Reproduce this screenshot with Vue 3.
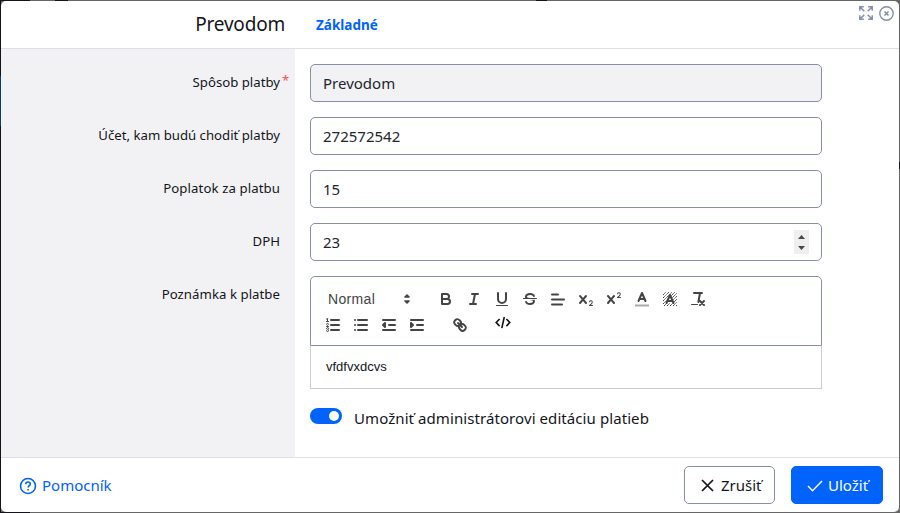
<script setup>
import { ref } from 'vue'

const method = ref('Prevodom')
const account = ref('272572542')
const fee = ref('15')
const vat = ref('23')
const editable = ref(true)
</script>

<template>
  <div class="page">
    <div class="modal">
      <header class="header">
        <h1 class="title">Prevodom</h1>
        <nav class="tabs"><a class="tab">Základné</a></nav>
        <div class="window-tools">
          <svg width="14" height="14" viewBox="0 0 14 14" fill="none" stroke="#868ea8" stroke-width="1.5">
            <path d="M.8 4.8v-4h4M1 1l4.3 4.3M9.2.8h4v4M13 1 8.7 5.3M.8 9.2v4h4M1 13l4.3-4.3M9.2 13.2h4v-4M13 13 8.7 8.7" />
          </svg>
          <svg width="15" height="15" viewBox="0 0 15 15" fill="none" stroke="#868ea8">
            <circle cx="7.5" cy="7.5" r="6.7" stroke-width="1.4" />
            <path d="m5.5 5.5 4 4m0-4-4 4" stroke-width="1.6" />
          </svg>
        </div>
      </header>

      <main class="body">
        <div class="row">
          <label class="label"><span>Spôsob platby</span><span class="required">*</span></label>
          <div class="field disabled"><input v-model="method" disabled /></div>
        </div>
        <div class="row">
          <label class="label"><span>Účet, kam budú chodiť platby</span></label>
          <div class="field"><input v-model="account" /></div>
        </div>
        <div class="row">
          <label class="label"><span class="loose">Poplatok za platbu</span></label>
          <div class="field"><input v-model="fee" /></div>
        </div>
        <div class="row">
          <label class="label"><span>DPH</span></label>
          <div class="field">
            <input v-model="vat" />
            <svg class="spinner" width="15" height="24" viewBox="0 0 15 24">
              <path fill="#efefef" d="M0 0h15v24H0z" />
              <path fill="#484848" d="m4 9 3.5-4L11 9zM4 16h7l-3.5 4z" />
            </svg>
          </div>
        </div>
        <div class="row">
          <label class="label"><span class="slightly-loose">Poznámka k platbe</span></label>
          <div class="editor">
            <div class="toolbar">
              <div class="tool-row">
                <div class="picker">
                  <span>Normal</span>
                  <svg class="q" viewBox="0 0 18 18">
                    <path class="f s" d="m7 11 2 2 2-2zM7 7l2-2 2 2z" />
                  </svg>
                </div>
                <button>
                  <svg class="q" viewBox="0 0 18 18"><path class="s" d="M5 4h4.5a2.5 2.5 0 0 1 0 5H5zM5 9h5.5a2.5 2.5 0 0 1 0 5H5z" /></svg>
                </button>
                <button>
                  <svg class="q" viewBox="0 0 18 18"><path class="s" d="M7 4h6M5 14h6M8 14l2-10" /></svg>
                </button>
                <button>
                  <svg class="q" viewBox="0 0 18 18"><path class="s" d="M5 3v6a4.012 4.012 0 0 0 4 4 4.012 4.012 0 0 0 4-4V3" /><rect class="f" height="1" rx=".5" width="12" x="3" y="15" /></svg>
                </button>
                <button>
                  <svg class="q" viewBox="0 0 18 18">
                    <path class="s thin" d="M15.5 8.5h-13" />
                    <path class="f" d="M9.007 8C6.542 7.791 6 7.519 6 6.5 6 5.792 7.283 5 9 5c1.571 0 2.765.679 2.969 1.309a1 1 0 0 0 1.9-.617C13.356 4.106 11.354 3 9 3 6.2 3 4 4.538 4 6.5a3.2 3.2 0 0 0 .5 1.843ZM8.984 10C11.457 10.208 12 10.479 12 11.5c0 .708-1.283 1.5-3 1.5-1.571 0-2.765-.679-2.969-1.309a1 1 0 1 0-1.9.617C4.644 13.894 6.646 15 9 15c2.8 0 5-1.538 5-3.5a3.2 3.2 0 0 0-.5-1.843Z" />
                  </svg>
                </button>
                <button>
                  <svg class="q" viewBox="0 0 18 18"><path class="s" d="M3 9.5h12M3 14.5h10M3 4.5h6" /></svg>
                </button>
                <button>
                  <svg class="q" viewBox="0 0 18 18">
                    <path class="f" d="M15.5 15H13.861a3.858 3.858 0 0 0 1.914-2.975 1.8 1.8 0 0 0-1.6-1.751A1.921 1.921 0 0 0 12.021 11.7a.5.5 0 1 0 .957.291.914.914 0 0 1 1.053-.725.81.81 0 0 1 .744.762c0 1.076-1.17 1.87-1.938 2.43A1.456 1.456 0 0 0 12 15.5a.5.5 0 0 0 .5.5h3a.5.5 0 0 0 0-1ZM9.65 5.241a1 1 0 0 0-1.409.108L6 7.964 3.759 5.349A1 1 0 0 0 2.192 6.59L4.684 9.5 2.241 12.35a1 1 0 0 0 1.518 1.3L6 11.036l2.241 2.614a1 1 0 1 0 1.518-1.3L7.317 9.5 9.759 6.651A1 1 0 0 0 9.65 5.241Z" />
                  </svg>
                </button>
                <button>
                  <svg class="q" viewBox="0 0 18 18">
                    <path class="f" d="M15.5 7H13.861a4.015 4.015 0 0 0 1.914-2.975 1.8 1.8 0 0 0-1.6-1.751A1.922 1.922 0 0 0 12.021 3.7a.5.5 0 1 0 .957.291.917.917 0 0 1 1.053-.725.81.81 0 0 1 .744.762c0 1.077-1.164 1.925-1.934 2.486A1.423 1.423 0 0 0 12 7.5a.5.5 0 0 0 .5.5h3a.5.5 0 0 0 0-1ZM9.651 5.241a1 1 0 0 0-1.41.108L6 7.964 3.759 5.349a1 1 0 1 0-1.519 1.3L4.683 9.5 2.241 12.35a1 1 0 1 0 1.519 1.3L6 11.036l2.241 2.614a1 1 0 0 0 1.519-1.3L7.317 9.5l2.442-2.849A1 1 0 0 0 9.651 5.241Z" />
                  </svg>
                </button>
                <button>
                  <svg class="q" viewBox="0 0 18 18"><path stroke="#aaa" stroke-width="2" d="M2 15.5h14" /><path class="s" d="M5.5 11 9 3l3.5 8M11.63 9H6.38" /></svg>
                </button>
                <button>
                  <svg class="q" viewBox="0 0 18 18">
                    <path stroke="#444" stroke-width="1" stroke-dasharray="1.4 .4" d="m2 5 3-3M2 8l6-6M2 11l9-9M2 14 14 2M3 16 16 3M6 16 16 6M9 16l7-7M12 16l4-4M15 16l1-1" />
                    <path fill="#fff" d="M8 5h2l3.5 8h-9z" />
                    <path class="s" d="M5.5 13 9 5l3.5 8M11.63 11H6.38" />
                  </svg>
                </button>
                <button>
                  <svg class="q" viewBox="0 0 18 18"><path class="s" d="M5 3h8M9.35 12 11.04 3M11 11l4 4M15 11l-4 4" /><rect class="f" height="1" rx=".5" width="7" x="2" y="14" /></svg>
                </button>
              </div>
              <div class="tool-row">
                <button>
                  <svg class="q" viewBox="0 0 18 18">
                    <path class="s" d="M7 4h8M7 9h8M7 14h8" />
                    <path class="s thin" d="M2.5 5.5h2M3.5 5.5v-3l-1 .5M4.5 10.5h-2c0-.9 1.85-1 1.85-2.1A.9.9 0 0 0 2.5 8.2M2.5 14.8a1 1 0 1 0 1-1.2 1 1 0 1 0-1-1" />
                  </svg>
                </button>
                <button>
                  <svg class="q" viewBox="0 0 18 18"><path class="s" d="M6 4h9M6 9h9M6 14h9M3 4h.01M3 9h.01M3 14h.01" /></svg>
                </button>
                <button>
                  <svg class="q" viewBox="0 0 18 18"><path class="s" d="M3 14h12M3 4h12M9 9h6" /><path class="s f" d="M5 7v4L3 9z" /></svg>
                </button>
                <button>
                  <svg class="q" viewBox="0 0 18 18"><path class="s" d="M3 14h12M3 4h12M9 9h6" /><path class="s f" d="M3 7v4l2-2z" /></svg>
                </button>
                <button class="group">
                  <svg class="q" viewBox="0 0 18 18">
                    <path class="s" d="m7 7 4 4" />
                    <path class="s" d="M8.9 4.577a3.476 3.476 0 0 1 .36 4.679A3.476 3.476 0 0 1 4.577 8.9C3.185 7.5 2.035 6.4 4.217 4.217S7.5 3.185 8.9 4.577ZM13.423 9.1a3.476 3.476 0 0 0-4.679-.36 3.476 3.476 0 0 0 .36 4.679c1.392 1.392 2.5 2.542 4.679.36S14.815 10.5 13.423 9.1Z" />
                  </svg>
                </button>
                <button class="group code">
                  <svg width="16" height="14" viewBox="0 0 16 14" fill="none" stroke="#111" stroke-width="1.6">
                    <path d="M4.6 3 1.2 6.5l3.4 3.6M11.4 3l3.4 3.5-3.4 3.6M9.3 1 6.8 12.2" />
                  </svg>
                </button>
              </div>
            </div>
            <div class="content">vfdfvxdcvs</div>
          </div>
        </div>
        <div class="row switch-row">
          <span class="label"></span>
          <span class="switch" :class="{ on: editable }" @click="editable = !editable"><i></i></span>
          <span class="switch-text">Umožniť administrátorovi editáciu platieb</span>
        </div>
      </main>

      <footer class="footer">
        <a class="help">
          <svg width="18" height="18" viewBox="0 0 18 18" fill="none" stroke="#0063fb" stroke-width="1.6">
            <circle cx="9" cy="9" r="7.5" />
            <path d="M6.7 7.2C6.8 5.7 7.7 5 9 5s2.3.8 2.3 2c0 1.6-2.2 1.7-2.2 3.5M9.1 12v1.5" />
          </svg>
          <span>Pomocník</span>
        </a>
        <button class="btn cancel">
          <svg width="13" height="13" viewBox="0 0 13 13" fill="none" stroke="#13151b" stroke-width="1.7"><path d="m1 1 11 11M12 1 1 12" /></svg>
          <span>Zrušiť</span>
        </button>
        <button class="btn save">
          <svg width="16" height="12" viewBox="0 0 16 12" fill="none" stroke="#fff" stroke-width="1.5"><path d="m1 6 4.5 4.7L15 1" /></svg>
          <span>Uložiť</span>
        </button>
      </footer>
    </div>
  </div>
</template>

<style>
body {
  margin: 0;
  overflow: hidden;
}
</style>

<style scoped>
* {
  box-sizing: border-box;
}
.page {
  width: 900px;
  height: 513px;
  padding: 1px;
  background:
    linear-gradient(#0b3e6d, #0b3e6d) 0 76px / 1px 50px no-repeat,
    linear-gradient(#14131c, #14131c) 0 0 / 1px 513px no-repeat,
    linear-gradient(#14131c, #14131c) 0 0 / 30px 1px no-repeat,
    linear-gradient(#14131c, #14131c) 55px 0 / 13px 1px no-repeat,
    linear-gradient(#14131c, #14131c) 536px 0 / 11px 1px no-repeat,
    linear-gradient(#14131c, #14131c) 0 512px / 30px 1px no-repeat,
    linear-gradient(#14131c, #14131c) 899px 162px / 1px 7px no-repeat,
    #666;
  font-family: "Noto Sans", sans-serif;
  color: #13151b;
}
.modal {
  display: flex;
  flex-direction: column;
  height: 511px;
  background: #fff;
  border-radius: 5px;
  overflow: hidden;
}
.header {
  display: flex;
  height: 48px;
  border-bottom: 1px solid #dcdfe6;
}
.title {
  width: 284px;
  margin: 0;
  font-size: 19px;
  font-weight: 400;
  line-height: 46px;
  letter-spacing: -0.2px;
  text-align: right;
}
.tab {
  display: block;
  margin-left: 31px;
  font-size: 13.5px;
  font-weight: 700;
  line-height: 48px;
  color: #0063fb;
}
.window-tools {
  display: flex;
  gap: 6px;
  margin: 5px 5px 0 auto;
}
.window-tools svg:first-child {
  margin-left: -1px;
}
.body {
  display: flex;
  flex-direction: column;
  gap: 15px;
  height: 408px;
  padding-top: 15px;
  background: linear-gradient(90deg, #f2f2f4 294px, #fff 294px);
}
.row {
  display: flex;
}
.label {
  display: flex;
  justify-content: flex-end;
  position: relative;
  width: 279px;
  margin-right: 30px;
  font-size: 13.2px;
  line-height: 36px;
}
.loose {
  letter-spacing: 0.1px;
}
.slightly-loose {
  letter-spacing: 0.05px;
}
.required {
  position: absolute;
  left: 281px;
  top: -2px;
  color: #ff4b58;
  font-size: 13px;
}
.field {
  display: flex;
  align-items: center;
  width: 512px;
  height: 38px;
  padding: 0 12px;
  border: 1px solid #868ea8;
  border-radius: 5px;
  background: #fff;
}
.field.disabled {
  background: #f2f2f4;
}
.field input {
  flex: 1;
  min-width: 0;
  height: 34px;
  padding: 0;
  border: 0;
  outline: 0;
  background: transparent;
  font: 15px "Noto Sans", sans-serif;
  color: #23252d;
}
.editor {
  width: 512px;
  height: 113px;
  font-family: "Liberation Sans", sans-serif;
}
.toolbar {
  height: 70px;
  padding: 10px 8px 0;
  border: 1px solid #868ea8;
  border-radius: 5px 5px 0 0;
}
.tool-row {
  display: flex;
  height: 26px;
}
.tool-row button {
  width: 28px;
  height: 24px;
  padding: 3px 5px;
  border: 0;
  background: none;
}
.tool-row .group {
  margin-left: 15px;
}
.tool-row .code {
  padding: 0 6px 5px;
}
.tool-row button svg {
  display: block;
}
.picker {
  display: flex;
  align-items: center;
  justify-content: space-between;
  width: 97px;
  height: 24px;
  margin-right: 16px;
  padding-left: 9px;
  font-size: 14px;
  font-weight: 500;
  letter-spacing: 0.35px;
  color: #444;
}
.q {
  width: 18px;
  height: 18px;
  fill: none;
}
.q .s {
  stroke: #444;
  stroke-width: 2;
  stroke-linecap: round;
  stroke-linejoin: round;
}
.q .thin {
  stroke-width: 1;
}
.q .f {
  fill: #444;
}
.picker .q .s {
  stroke-width: 1.6;
}
.content {
  height: 43px;
  padding: 12px 15px;
  border: 1px solid #ccc;
  border-top: 0;
  font-size: 13px;
  line-height: 18px;
}
.switch-row .label {
  height: 20px;
}
.switch {
  display: flex;
  justify-content: flex-start;
  width: 32px;
  height: 16px;
  margin-top: 4px;
  padding: 3px;
  border-radius: 8px;
  background: #868ea8;
}
.switch.on {
  justify-content: flex-end;
  background: #0063fb;
}
.switch i {
  width: 10px;
  height: 10px;
  border-radius: 50%;
  background: #fff;
}
.switch-text {
  margin-left: 12px;
  font-size: 15px;
  line-height: 28px;
  letter-spacing: 0.08px;
}
.footer {
  display: flex;
  align-items: center;
  height: 55px;
  padding: 0 16px 0 18px;
  border-top: 1px solid #dcdfe6;
}
.help {
  display: flex;
  align-items: center;
  gap: 5px;
  margin-right: auto;
  color: #0063fb;
  font-size: 15px;
}
.help svg {
  margin-top: 1px;
}
.btn {
  display: flex;
  align-items: center;
  height: 38px;
  padding: 0;
  border: 1px solid #868ea8;
  border-radius: 5px;
  background: #fff;
  font: 15px "Noto Sans", sans-serif;
  color: #13151b;
}
.btn svg {
  margin-top: 1px;
}
.cancel {
  width: 91px;
  padding-left: 16px;
  gap: 7px;
}
.save {
  width: 92px;
  margin-left: 16px;
  padding-left: 15px;
  gap: 5px;
  border-color: #0063fb;
  background: #0063fb;
  color: #fff;
}
</style>
